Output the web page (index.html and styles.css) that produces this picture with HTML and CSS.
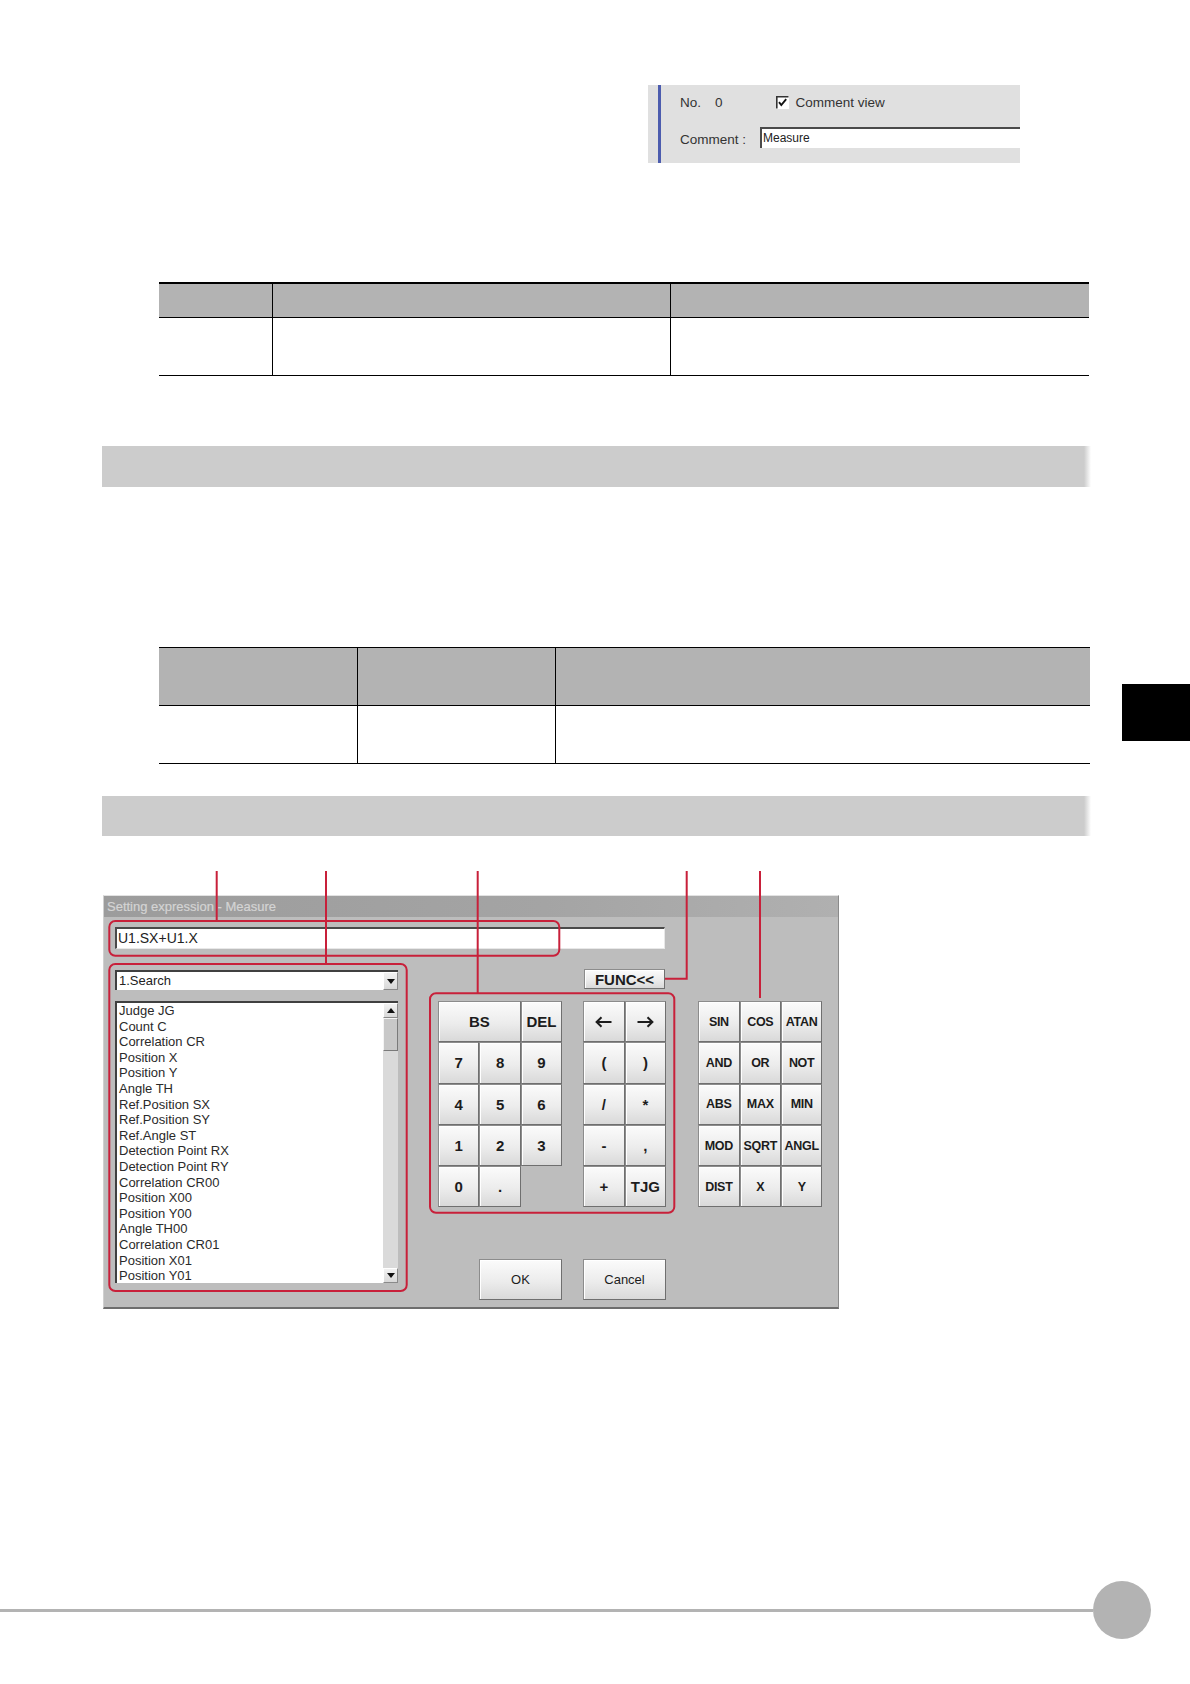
FILE: index.html
```html
<!DOCTYPE html>
<html>
<head>
<meta charset="utf-8">
<title>Setting expression</title>
<link rel="stylesheet" href="styles.css">
</head>
<body>
<div class="page">

  <div class="comment-panel">
    <div class="cp-inner">
      <div class="cp-row1">
        <span class="cp-no">No.</span>
        <span class="cp-num">0</span>
        <span class="cp-check"><svg width="13" height="13" viewBox="0 0 13 13"><rect x="0" y="0" width="13" height="13" fill="#fff"/><path d="M0.8 12.5 V0.8 H12.5" fill="none" stroke="#333" stroke-width="1.6"/><path d="M3 6.2 L5.3 9 L10.2 3.2" fill="none" stroke="#111" stroke-width="1.9"/></svg></span>
        <span class="cp-view">Comment view</span>
      </div>
      <div class="cp-row2">
        <span class="cp-label">Comment :</span>
        <div class="cp-input">Measure</div>
      </div>
    </div>
  </div>

  <div class="tbl tbl1">
    <div class="th"></div><div class="th vl"></div><div class="th vl"></div>
    <div class="td"></div><div class="td vl"></div><div class="td vl"></div>
  </div>

  <div class="bar bar1"></div>

  <div class="tbl tbl2">
    <div class="th"></div><div class="th vl"></div><div class="th vl"></div>
    <div class="td"></div><div class="td vl"></div><div class="td vl"></div>
  </div>

  <div class="bar bar2"></div>

  <div class="figure">
    <div class="dialog">
      <div class="titlebar">Setting expression - Measure</div>
      <div class="expr-row"><div class="expr-input">U1.SX+U1.X</div></div>
      <div class="dlg-body">
        <div class="left-col">
          <div class="dropdown">
            <span class="dd-text">1.Search</span>
            <span class="dd-btn"><span class="tri-down"></span></span>
          </div>
          <div class="listbox">
            <ul class="items">
              <li>Judge JG</li>
              <li>Count C</li>
              <li>Correlation CR</li>
              <li>Position X</li>
              <li>Position Y</li>
              <li>Angle TH</li>
              <li>Ref.Position SX</li>
              <li>Ref.Position SY</li>
              <li>Ref.Angle ST</li>
              <li>Detection Point RX</li>
              <li>Detection Point RY</li>
              <li>Correlation CR00</li>
              <li>Position X00</li>
              <li>Position Y00</li>
              <li>Angle TH00</li>
              <li>Correlation CR01</li>
              <li>Position X01</li>
              <li>Position Y01</li>
            </ul>
            <div class="vscroll">
              <span class="sb-btn"><span class="tri-up"></span></span>
              <span class="sb-thumb"></span>
              <span class="sb-track"></span>
              <span class="sb-btn"><span class="tri-down"></span></span>
            </div>
          </div>
        </div>
        <div class="right-area">
          <div class="func-row"><div class="key func-btn">FUNC&lt;&lt;</div></div>
          <div class="pads">
            <div class="numpad">
              <div class="key span2">BS</div><div class="key">DEL</div>
              <div class="key">7</div><div class="key">8</div><div class="key">9</div>
              <div class="key">4</div><div class="key">5</div><div class="key">6</div>
              <div class="key">1</div><div class="key">2</div><div class="key">3</div>
              <div class="key">0</div><div class="key">.</div>
            </div>
            <div class="opspad">
              <div class="key" aria-label="left"><svg width="17" height="12" viewBox="0 0 17 12"><path d="M16.5 6 H2 M6.5 1.2 L1.6 6 L6.5 10.8" fill="none" stroke="#1c1c1c" stroke-width="2"/></svg></div>
              <div class="key" aria-label="right"><svg width="17" height="12" viewBox="0 0 17 12"><path d="M0.5 6 H15 M10.5 1.2 L15.4 6 L10.5 10.8" fill="none" stroke="#1c1c1c" stroke-width="2"/></svg></div>
              <div class="key">(</div><div class="key">)</div>
              <div class="key">/</div><div class="key">*</div>
              <div class="key">-</div><div class="key">,</div>
              <div class="key">+</div><div class="key">TJG</div>
            </div>
            <div class="funcpad">
              <div class="key fn">SIN</div><div class="key fn">COS</div><div class="key fn">ATAN</div>
              <div class="key fn">AND</div><div class="key fn">OR</div><div class="key fn">NOT</div>
              <div class="key fn">ABS</div><div class="key fn">MAX</div><div class="key fn">MIN</div>
              <div class="key fn">MOD</div><div class="key fn">SQRT</div><div class="key fn">ANGL</div>
              <div class="key fn">DIST</div><div class="key fn">X</div><div class="key fn">Y</div>
            </div>
          </div>
          <div class="ok-row">
            <div class="key plain ok">OK</div>
            <div class="key plain cancel">Cancel</div>
          </div>
        </div>
      </div>
    </div>
    <svg class="callouts" width="1190" height="440" viewBox="0 0 1190 440">
      <g fill="none" stroke="#c8203a" stroke-width="2">
        <path d="M216.7 0 V50"/>
        <rect x="109.3" y="50" width="450" height="34.7" rx="6"/>
        <path d="M326 0 V93"/>
        <rect x="109.3" y="93" width="297.4" height="327" rx="6"/>
        <path d="M477.7 0 V122.3"/>
        <rect x="430" y="122.3" width="244.3" height="219.4" rx="6"/>
        <path d="M686.7 0 V107.7 H665"/>
        <path d="M760 0 V127"/>
      </g>
    </svg>
  </div>

  <div class="footer">
    <div class="footer-line"></div>
    <div class="footer-circle"></div>
  </div>

  <div class="side-tab"></div>
</div>
</body>
</html>
```

FILE: styles.css
```css
html, body {
  margin: 0;
  padding: 0;
  background: #fff;
}
.page {
  position: relative;
  width: 1190px;
  height: 1684px;
  overflow: hidden;
  font-family: "Liberation Sans", Arial, sans-serif;
  color: #222;
}

/* ---- comment panel ---- */
.comment-panel {
  margin-left: 648px;
  width: 372px;
  height: 163px;
  box-sizing: border-box;
  padding-left: 10px;
  background: #e0e0e0;
  border-top: 85px solid #fff;
}
.cp-inner {
  height: 100%;
  border-left: 3px solid #4c5cae;
  box-sizing: border-box;
  padding-left: 19px;
  font-size: 13.5px;
  color: #333;
}
.cp-row1 {
  height: 34px;
  display: flex;
  align-items: center;
}
.cp-num { margin-left: 14px; }
.cp-check { margin-left: 53px; display: flex; }
.cp-view { margin-left: 7px; }
.cp-row2 {
  margin-top: 8px;
  height: 21px;
  display: flex;
  align-items: center;
}
.cp-label { width: 80px; padding-top: 3px; }
.cp-input {
  flex: 1;
  height: 21px;
  box-sizing: border-box;
  background: #fff;
  border-top: 2px solid #4a4a4a;
  border-left: 2px solid #4a4a4a;
  font-size: 12px;
  color: #222;
  line-height: 18px;
  padding-left: 1px;
}

/* ---- tables ---- */
.tbl {
  display: grid;
  margin-left: 159px;
  border-bottom: 1px solid #000;
}
.tbl1 {
  margin-top: 119px;
  width: 930px;
  border-top: 2px solid #000;
  grid-template-columns: 113px 398px 419px;
  grid-template-rows: 34px 57px;
}
.tbl2 {
  margin-top: 160px;
  width: 931px;
  border-top: 1px solid #000;
  grid-template-columns: 198px 198px 535px;
  grid-template-rows: 58px 57px;
}
.th {
  background: #b3b3b3;
  border-bottom: 1px solid #000;
}
.vl { border-left: 1px solid #000; }
.th, .td { box-sizing: border-box; }

/* ---- section bars ---- */
.bar {
  margin-left: 102px;
  width: 989px;
  background: linear-gradient(to right, #cccccc calc(100% - 7px), #ffffff);
}
.bar1 { margin-top: 70px; height: 41px; }
.bar2 { margin-top: 32px; height: 40px; }

/* ---- figure ---- */
.figure {
  position: relative;
  margin-top: 35px;
  padding-top: 24px;
}
.callouts {
  position: absolute;
  left: 0;
  top: 0;
  pointer-events: none;
}
.dialog {
  margin-left: 103px;
  width: 736px;
  height: 414px;
  box-sizing: border-box;
  background: #bdbdbd;
  border-top: 1px solid #e2e2e2;
  border-left: 1px solid #d0d0d0;
  border-right: 1px solid #8a8a8a;
  border-bottom: 2px solid #6e6e6e;
}
.titlebar {
  height: 21px;
  background: linear-gradient(to right, #9c9c9c, #a4a4a4 60%, #b0b0b0);
  color: #d4d4d4;
  font-size: 13px;
  line-height: 21px;
  padding-left: 3px;
  white-space: nowrap;
  -webkit-text-stroke: 0.2px #d4d4d4;
}
.expr-row {
  padding: 10px 0 0 11px;
}
.expr-input {
  width: 550px;
  height: 22px;
  box-sizing: border-box;
  background: #fff;
  border-top: 2px solid #4a4a4a;
  border-left: 2px solid #4a4a4a;
  border-right: 1px solid #e8e8e8;
  border-bottom: 1px solid #e8e8e8;
  font-size: 14px;
  line-height: 19px;
  padding-left: 1px;
  color: #222;
}
.dlg-body {
  display: flex;
  margin-top: 20px;
  padding-left: 11px;
}
.left-col {
  width: 283px;
}
.dropdown {
  margin-top: 1px;
  height: 20px;
  box-sizing: border-box;
  background: #fff;
  border-top: 2px solid #404040;
  border-left: 2px solid #404040;
  display: flex;
  align-items: stretch;
}
.dd-text {
  flex: 1;
  font-size: 13px;
  line-height: 17px;
  padding-left: 2px;
}
.dd-btn, .sb-btn {
  width: 15px;
  box-sizing: border-box;
  background: linear-gradient(#f2f2f2, #d8d8d8);
  border: 1px solid #8a8a8a;
  border-top-color: #fff;
  border-left-color: #fff;
  display: flex;
  align-items: center;
  justify-content: center;
}
.tri-down {
  width: 0; height: 0;
  border-left: 4px solid transparent;
  border-right: 4px solid transparent;
  border-top: 5px solid #111;
}
.tri-up {
  width: 0; height: 0;
  border-left: 4px solid transparent;
  border-right: 4px solid transparent;
  border-bottom: 5px solid #111;
}
.listbox {
  margin-top: 11px;
  height: 282px;
  box-sizing: border-box;
  background: #fff;
  border-top: 2px solid #404040;
  border-left: 2px solid #404040;
  display: flex;
}
.items {
  flex: 1;
  list-style: none;
  margin: 0;
  padding: 0 0 0 2px;
  font-size: 13px;
  line-height: 15.6px;
  color: #2a2a2a;
  overflow: hidden;
}
.vscroll {
  width: 15px;
  display: flex;
  flex-direction: column;
}
.sb-btn { height: 15px; }
.sb-thumb {
  height: 33px;
  box-sizing: border-box;
  background: #c8c8c8;
  border: 1px solid #7a7a7a;
  border-top-color: #f4f4f4;
  border-left-color: #f4f4f4;
}
.sb-track {
  flex: 1;
  background: #dadada;
}

.right-area {
  margin-left: 40px;
}
.func-row {
  height: 20px;
  display: flex;
}
.key {
  box-sizing: border-box;
  display: flex;
  align-items: center;
  justify-content: center;
  background: linear-gradient(#fbfbfb, #ececec 55%, #d9d9d9);
  border: 1px solid #6f6f6f;
  border-top-color: #8c8c8c;
  border-left-color: #8c8c8c;
  box-shadow: inset 1px 1px 0 #ffffff;
  font-weight: bold;
  font-size: 15px;
  color: #1c1c1c;
}
.func-btn {
  margin-left: 146px;
  width: 81px;
  height: 20px;
  padding-top: 1px;
}
.pads {
  display: flex;
  margin-top: 12px;
}
.numpad, .funcpad {
  display: grid;
  grid-template-columns: repeat(3, 41.4px);
  grid-template-rows: repeat(5, 41.3px);
}
.opspad {
  display: grid;
  grid-template-columns: repeat(2, 41.5px);
  grid-template-rows: repeat(5, 41.3px);
  margin-left: 21px;
}
.funcpad { margin-left: 32px; }
.span2 { grid-column: span 2; }
.fn { font-size: 12.5px; letter-spacing: -0.3px; }
.ok-row {
  display: flex;
  margin-top: 52px;
}
.plain {
  font-weight: normal;
  font-size: 13px;
  width: 83px;
  height: 41px;
}
.ok { margin-left: 41px; }
.cancel { margin-left: 21px; }

/* ---- footer ---- */
.footer {
  margin-top: 272px;
  height: 58px;
  display: flex;
  align-items: center;
  padding-right: 39px;
}
.footer-line {
  flex: 1;
  height: 3px;
  background: #b3b3b3;
}
.footer-circle {
  width: 58px;
  height: 58px;
  border-radius: 50%;
  background: #b3b3b3;
}

.side-tab {
  position: absolute;
  left: 1122px;
  top: 684px;
  width: 68px;
  height: 57px;
  background: #000;
}
```
